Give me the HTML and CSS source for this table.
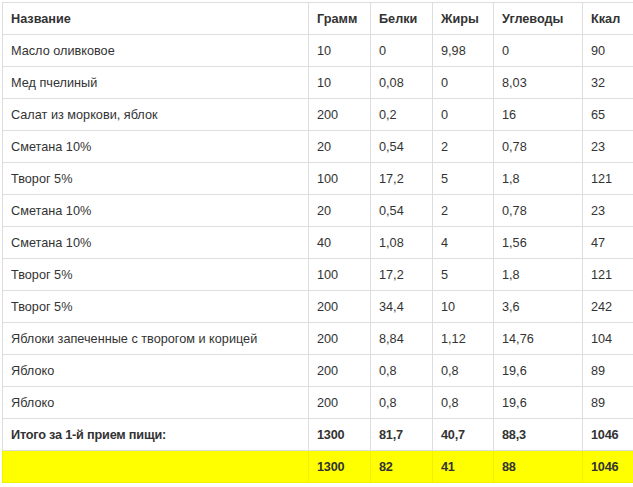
FILE: index.html
```html
<!DOCTYPE html>
<html lang="ru">
<head>
<meta charset="utf-8">
<link rel="stylesheet" href="styles.css">
</head>
<body>
<table class="nutr">
<colgroup>
<col class="c-name"><col class="c-g"><col class="c-b"><col class="c-j"><col class="c-u"><col class="c-k">
</colgroup>
<thead>
<tr><th>Название</th><th>Грамм</th><th>Белки</th><th>Жиры</th><th>Углеводы</th><th>Ккал</th></tr>
</thead>
<tbody>
<tr><td>Масло оливковое</td><td>10</td><td>0</td><td>9,98</td><td>0</td><td>90</td></tr>
<tr><td>Мед пчелиный</td><td>10</td><td>0,08</td><td>0</td><td>8,03</td><td>32</td></tr>
<tr><td>Салат из моркови, яблок</td><td>200</td><td>0,2</td><td>0</td><td>16</td><td>65</td></tr>
<tr><td>Сметана 10%</td><td>20</td><td>0,54</td><td>2</td><td>0,78</td><td>23</td></tr>
<tr><td>Творог 5%</td><td>100</td><td>17,2</td><td>5</td><td>1,8</td><td>121</td></tr>
<tr><td>Сметана 10%</td><td>20</td><td>0,54</td><td>2</td><td>0,78</td><td>23</td></tr>
<tr><td>Сметана 10%</td><td>40</td><td>1,08</td><td>4</td><td>1,56</td><td>47</td></tr>
<tr><td>Творог 5%</td><td>100</td><td>17,2</td><td>5</td><td>1,8</td><td>121</td></tr>
<tr><td>Творог 5%</td><td>200</td><td>34,4</td><td>10</td><td>3,6</td><td>242</td></tr>
<tr><td>Яблоки запеченные с творогом и корицей</td><td>200</td><td>8,84</td><td>1,12</td><td>14,76</td><td>104</td></tr>
<tr><td>Яблоко</td><td>200</td><td>0,8</td><td>0,8</td><td>19,6</td><td>89</td></tr>
<tr><td>Яблоко</td><td>200</td><td>0,8</td><td>0,8</td><td>19,6</td><td>89</td></tr>
<tr class="total"><td>Итого за 1-й прием пищи:</td><td>1300</td><td>81,7</td><td>40,7</td><td>88,3</td><td>1046</td></tr>
<tr class="total hl"><td></td><td>1300</td><td>82</td><td>41</td><td>88</td><td>1046</td></tr>
</tbody>
</table>
</body>
</html>
```
FILE: styles.css
```css
html, body {
  margin: 0;
  padding: 0;
  background: #fff;
  overflow: hidden;
}
body {
  padding: 2px 0 0 2px;
  font-family: "Liberation Sans", Arial, sans-serif;
  font-size: 12.7px;
  color: #333;
}
.nutr {
  border-collapse: collapse;
  table-layout: fixed;
  width: 631px;
}
.c-name { width: 306px; }
.c-g { width: 62px; }
.c-b { width: 62px; }
.c-j { width: 61px; }
.c-u { width: 89px; }
.c-k { width: 51px; }
.nutr th,
.nutr td {
  border: 1px solid #ddd;
  height: 32px;
  padding: 0 7px 0 8px;
  text-align: left;
  vertical-align: middle;
  white-space: nowrap;
  overflow: hidden;
  box-sizing: border-box;
  line-height: 16px;
}
.nutr th:last-child,
.nutr td:last-child {
  border-right-color: transparent;
}
.nutr th { font-weight: bold; }
.total td {
  font-weight: bold;
  letter-spacing: -0.2px;
}
.hl td {
  background: #ffff00;
  border-color: #f0f000;
}
```
